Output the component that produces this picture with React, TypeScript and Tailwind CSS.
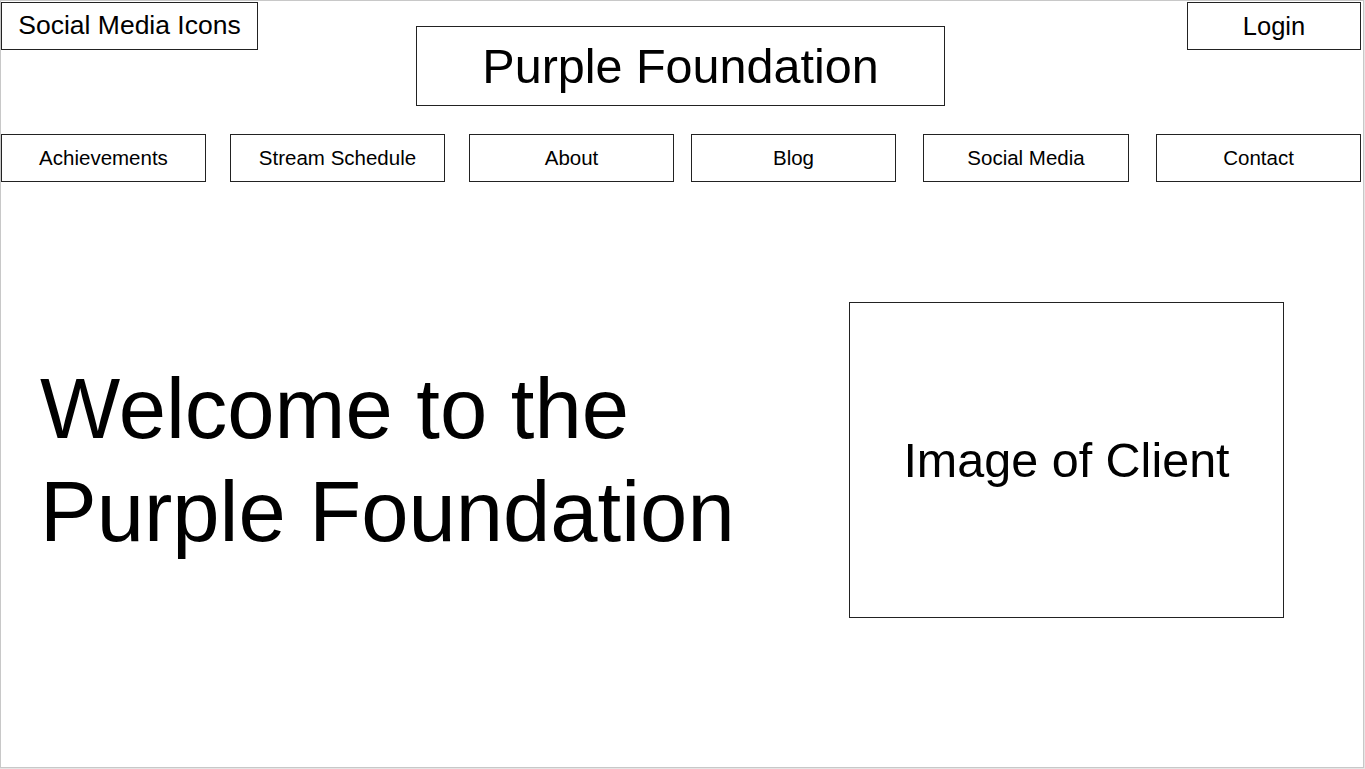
import React from "react";

const navItems = [
  { label: "Achievements", w: "w-[205px]", ml: "ml-0" },
  { label: "Stream Schedule", w: "w-[215px]", ml: "ml-[24px]" },
  { label: "About", w: "w-[205px]", ml: "ml-[24px]" },
  { label: "Blog", w: "w-[205px]", ml: "ml-[17px]" },
  { label: "Social Media", w: "w-[206px]", ml: "ml-[27px]" },
  { label: "Contact", w: "w-[205px]", ml: "ml-[27px]" },
];

export default function App() {
  return (
    <div className="min-h-screen bg-[#e6e6e6] font-['Liberation_Sans',Arial,sans-serif] text-black">
      <div className="w-[1364px] h-[768px] bg-white border border-[#c8c8c8] flex flex-col">
        {/* top bar */}
        <header className="flex items-start pt-px">
          <div className="w-[257px] h-[48px] border border-[#222] flex items-center justify-center text-[26.5px]">
            Social Media Icons
          </div>
          <div className="mt-[24px] ml-[158px] w-[529px] h-[80px] border border-[#222] flex items-center justify-center text-[48.5px]">
            Purple Foundation
          </div>
          <div className="ml-[242px] w-[174px] h-[48px] border border-[#222] flex items-center justify-center text-[25.5px]">
            Login
          </div>
        </header>

        {/* nav */}
        <nav className="flex mt-[28px]">
          {navItems.map((n) => (
            <div
              key={n.label}
              className={`${n.w} ${n.ml} h-[48px] border border-[#222] flex items-center justify-center text-[20.5px]`}
            >
              {n.label}
            </div>
          ))}
        </nav>

        {/* hero */}
        <section className="flex items-center mt-[120px]">
          <h1 className="ml-[39px] w-[780px] text-[85px] leading-[103px] font-normal">
            Welcome to the
            <br />
            Purple Foundation
          </h1>
          <div className="ml-[29px] w-[435px] h-[316px] border border-[#222] flex items-center justify-center text-[48.5px]">
            Image of Client
          </div>
        </section>
      </div>
    </div>
  );
}
